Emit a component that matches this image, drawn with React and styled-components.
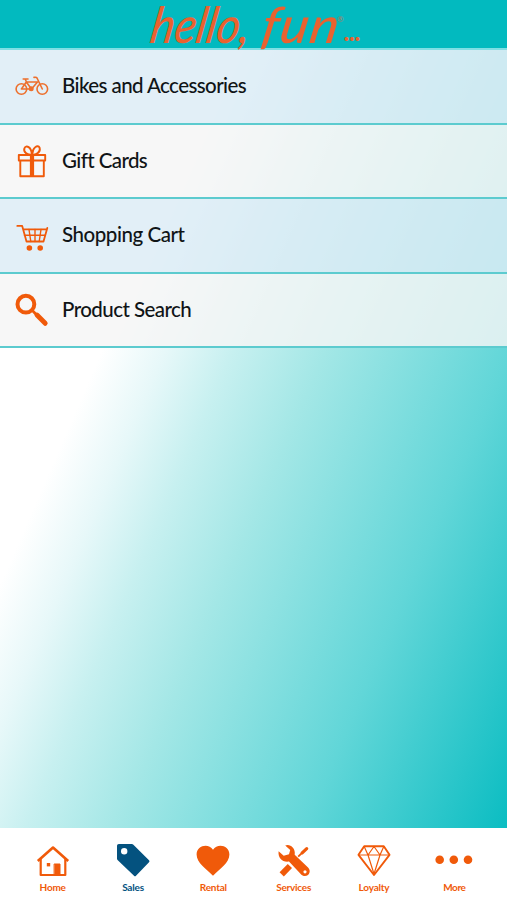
import React from "react";
import styled, { createGlobalStyle } from "styled-components";

const ORANGE = "#f05a0a";
const NAVY = "#04527f";

const GlobalStyle = createGlobalStyle`
  * { box-sizing: border-box; }
  body { margin: 0; font-family: Lato, "Open Sans", sans-serif; }
`;

const Screen = styled.div`
  display: flex;
  flex-direction: column;
  width: 507px;
  height: 900px;
  overflow: hidden;
  background: #fff;
`;

const Header = styled.header`
  flex: 0 0 50px;
  display: flex;
  padding-left: 149px;
  background: #02babf;
  border-bottom: 2px solid #7fdfe4;
`;

const Wordmark = styled.div`
  display: flex;
  align-items: flex-start;
  color: #e9622f;
  font-family: Lato, sans-serif;
  font-style: italic;
  font-weight: 500;
  white-space: nowrap;
`;

const Script = styled.span`
  flex: 0 0 ${(p) => p.$width}px;
  height: 34px;
  margin-top: 10px;
  font-size: 38px;
  line-height: 34px;
  letter-spacing: ${(p) => p.$spacing}px;
  transform: skewX(-10deg) scale(${(p) => p.$stretch}, 1.32);
  transform-origin: 0 30px;
`;

const Dots = styled.span`
  font-size: 30px;
  line-height: 34px;
  letter-spacing: -1.5px;
  margin-top: 12px;
`;

const Registered = styled.span`
  flex: 0 0 6px;
  font-size: 8px;
  line-height: 10px;
  margin-top: 14px;
  margin-left: -6px;
  font-style: normal;
  opacity: 0.7;
`;

const Main = styled.main`
  flex: 1;
  background: linear-gradient(113.5deg, #fff 27.5%, #e7f8f9 35%, #c7f0f0 43%, #a3e7e6 54%, #61d6d8 76%, #0bbdc2 100%);
`;

const MenuRow = styled.div`
  display: flex;
  align-items: center;
  height: 74.6px;
  padding: 0 0 2px 15px;
  gap: 13px;
  border-bottom: 2px solid #5ccbcf;
  background: ${(p) => (p.$tinted ? "rgba(220,236,245,.82)" : "rgba(245,245,245,.82)")};
  background-clip: padding-box;
`;

const MenuLabel = styled.span`
  color: #101416;
  font-size: 20.5px;
  font-weight: 500;
  line-height: 26px;
  letter-spacing: ${(p) => p.$spacing}px;
  white-space: nowrap;
`;

const TabBar = styled.nav`
  flex: 0 0 72px;
  display: grid;
  grid-template-columns: repeat(6, 1fr);
  padding: 15px 12.5px 0;
  background: #fff;
`;

const Tab = styled.div`
  display: flex;
  flex-direction: column;
  align-items: center;
  color: ${(p) => (p.$active ? NAVY : ORANGE)};
`;

const TabLabel = styled.span`
  margin-top: 3px;
  font-size: 10px;
  font-weight: 700;
  line-height: 14px;
  letter-spacing: ${(p) => p.$spacing}px;
`;

const Icon = styled.svg`
  display: block;
  width: 34px;
  height: 34px;
  flex: none;
  overflow: visible;
  color: inherit;
`;

const MenuIcon = styled(Icon)`
  color: ${ORANGE};
`;

const line = { fill: "none", stroke: "currentColor", strokeLinecap: "round", strokeLinejoin: "round" };

const Bike = () => (
  <MenuIcon viewBox="0 0 34 34" {...line} strokeWidth="1.6" opacity=".85">
    <circle cx="6.4" cy="21" r="5.3" />
    <circle cx="27.3" cy="21" r="5.3" />
    <path d="M6.4 21 11.3 14 16.5 21H6.4M11.3 14H22.5L16.5 21M11.8 15 10.3 11.2M8.2 11H13M27.3 21 22 10Q21.4 8.9 19 9.4" />
    <circle cx="16.2" cy="20.8" r="1.7" fill="currentColor" />
  </MenuIcon>
);

const Gift = () => (
  <MenuIcon viewBox="0 0 34 34" {...line} strokeWidth="1.9">
    <path d="M3.8 12H30.2V17.5H3.8ZM5.3 17.5V33.3H28.8V17.5" />
    <path d="M17 12V33" strokeWidth="4.2" strokeLinecap="butt" />
    <path d="M16.8 11.5C12 12.5 8.2 8.5 9.4 5.3 11 1.5 16.5 4 16.8 11.5ZM17.2 11.5C21 12.5 26 9 24.6 4.7 22.8 1.1 17.4 4.5 17.2 11.5Z" />
  </MenuIcon>
);

const Cart = () => (
  <MenuIcon viewBox="0 0 34 34" {...line} strokeWidth="1.8">
    <path d="M2.3 8.9H7.2L11.5 24.5H28.5L32.3 10.9M8.2 12.3H31.5" />
    <path strokeWidth="1.4" d="M9.4 18.2H30M14 12.5 15.8 24.5M20 12.5V24.5M26 12.5 24.2 24.5" />
    <circle cx="14.4" cy="31" r="1.9" fill="currentColor" />
    <circle cx="25.2" cy="31" r="1.9" fill="currentColor" />
  </MenuIcon>
);

const Search = () => (
  <MenuIcon viewBox="0 0 34 34" {...line}>
    <circle cx="10.9" cy="12.2" r="8.4" strokeWidth="4" />
    <path d="M18.3 19.6 21 22.3" strokeWidth="2.8" />
    <path d="M22 23.1 30.2 31.3" strokeWidth="4.9" />
  </MenuIcon>
);

const Home = () => (
  <Icon viewBox="0 0 34 34" {...line} strokeWidth="2.2">
    <path d="M1.8 18 17 4.6 32.2 18" strokeLinecap="butt" strokeWidth="2.6" />
    <path d="M4.7 16.5V32H29.3V16.5" />
    <path d="M18.5 21H24V31.5H18.5Z" fill="currentColor" strokeWidth="1" />
    <path d="M12.5 20V23.4" strokeWidth="3.4" strokeLinecap="butt" />
  </Icon>
);

const Tag = () => (
  <Icon viewBox="0 0 34 34">
    <path fill="currentColor" fillRule="evenodd" d="M2.8 1H15.8Q16.7 1 17.4 1.7L33 17.3Q34 18.3 33 19.3L20 32.7Q19 33.7 18 32.7L1.8 17.3Q1 16.6 1 15.6V2.8Q1 1 2.8 1ZM8.2 5A3.2 3.2 0 1 0 8.2 11.4 3.2 3.2 0 1 0 8.2 5Z" />
  </Icon>
);

const Heart = () => (
  <Icon viewBox="0 0 34 34">
    <path fill="currentColor" d="M17 32.8C10.5 26 .6 20 .6 11.5 .6 2.3 12.5-.2 17 6.7 21.5-.2 33.4 2.3 33.4 11.5 33.4 20 23.5 26 17 32.8Z" />
  </Icon>
);

const Services = () => (
  <Icon viewBox="0 0 34 34">
    <path fill="currentColor" d="M8.2 2.5C12.5.5 18.8 4.5 17.7 11.7L30.8 24.2C33.4 26.6 33.2 30 31 32 28.7 33.8 25.7 33.3 23.7 31L12 18.5C5.5 19.5.7 14.8 1.6 8.2L6.7 12.8 12 11.2 13.2 6.9Z" />
    <circle cx="28" cy="28.8" r="1.6" fill="#fff" />
    <path stroke="currentColor" strokeWidth="6" d="M12.9 23 4.7 31.4" />
    <path stroke="currentColor" strokeWidth="1.8" d="M21.2 13.6 25.5 9.3" />
    <path stroke="currentColor" strokeWidth="3.2" strokeLinecap="round" d="M25.2 9.8 29.7 5.6" />
  </Icon>
);

const Diamond = () => (
  <Icon viewBox="0 0 34 34" {...line} strokeWidth="1.9">
    <path d="M7.2 3.2H26.8L32.5 11.8 17 32 1.5 11.8Z" />
    <path strokeWidth="1.2" d="M2 12H32M7.2 3.5 11 12 17 3.5 23 12 26.8 3.5M11 12 17 31 23 12" />
  </Icon>
);

const More = () => (
  <Icon viewBox="0 0 34 34" fill="currentColor">
    <circle cx="2.7" cy="16.7" r="4.3" />
    <circle cx="16.8" cy="16.7" r="4.3" />
    <circle cx="31" cy="16.7" r="4.3" />
  </Icon>
);

const menu = [
  { label: "Bikes and Accessories", Glyph: Bike, spacing: -0.58 },
  { label: "Gift Cards", Glyph: Gift, spacing: -0.6 },
  { label: "Shopping Cart", Glyph: Cart, spacing: -0.45 },
  { label: "Product Search", Glyph: Search, spacing: -0.55 },
];

const tabs = [
  { label: "Home", Glyph: Home, spacing: -0.2 },
  { label: "Sales", Glyph: Tag, spacing: -0.2 },
  { label: "Rental", Glyph: Heart, spacing: -0.2 },
  { label: "Services", Glyph: Services, spacing: -0.25 },
  { label: "Loyalty", Glyph: Diamond, spacing: -0.2 },
  { label: "More", Glyph: More, spacing: -0.4 },
];

export default function App() {
  return (
    <Screen>
      <GlobalStyle />
      <Header>
        <Wordmark>
          <Script $width={111} $spacing={0} $stretch={1.18}>hello,</Script>
          <Script $width={83} $spacing={1} $stretch={1.4}>fun</Script>
          <Registered>®</Registered>
          <Dots>...</Dots>
        </Wordmark>
      </Header>
      <Main>
        {menu.map(({ label, Glyph, spacing }, i) => (
          <MenuRow key={label} $tinted={i % 2 === 0}>
            <Glyph />
            <MenuLabel $spacing={spacing}>{label}</MenuLabel>
          </MenuRow>
        ))}
      </Main>
      <TabBar>
        {tabs.map(({ label, Glyph, spacing }) => (
          <Tab key={label} $active={label === "Sales"}>
            <Glyph />
            <TabLabel $spacing={spacing}>{label}</TabLabel>
          </Tab>
        ))}
      </TabBar>
    </Screen>
  );
}
